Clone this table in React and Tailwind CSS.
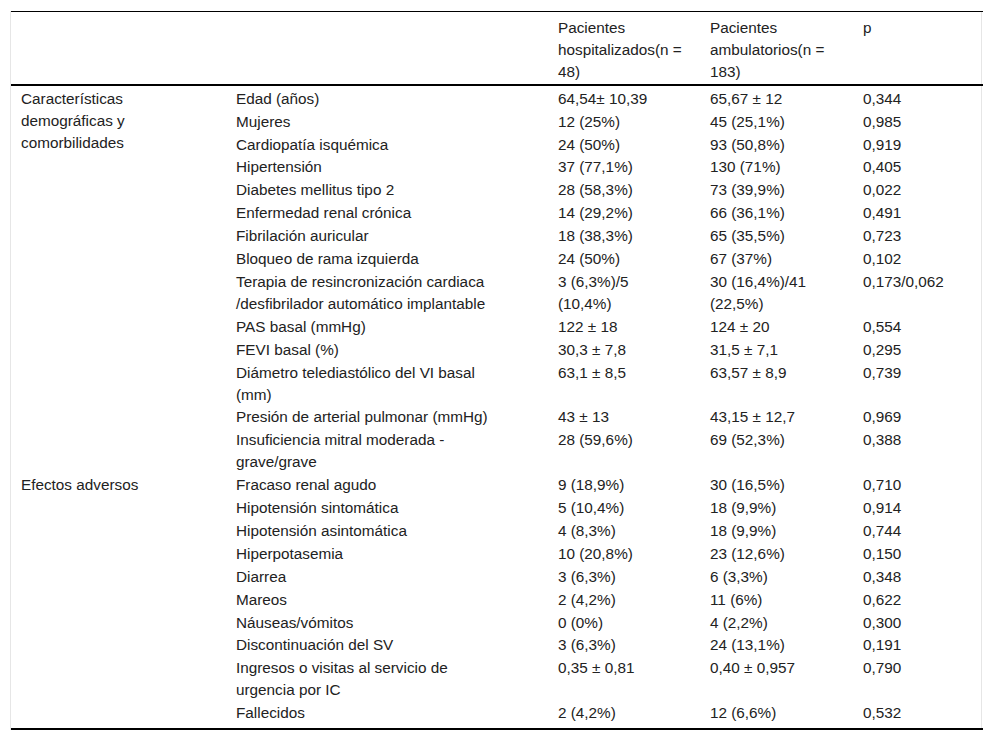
const rows = [
  { group: "Características\ndemográficas y\ncomorbilidades", span: 14, label: "Edad (años)", a: "64,54± 10,39", b: "65,67 ± 12", p: "0,344" },
  { label: "Mujeres", a: "12 (25%)", b: "45 (25,1%)", p: "0,985" },
  { label: "Cardiopatía isquémica", a: "24 (50%)", b: "93 (50,8%)", p: "0,919" },
  { label: "Hipertensión", a: "37 (77,1%)", b: "130 (71%)", p: "0,405" },
  { label: "Diabetes mellitus tipo 2", a: "28 (58,3%)", b: "73 (39,9%)", p: "0,022" },
  { label: "Enfermedad renal crónica", a: "14 (29,2%)", b: "66 (36,1%)", p: "0,491" },
  { label: "Fibrilación auricular", a: "18 (38,3%)", b: "65 (35,5%)", p: "0,723" },
  { label: "Bloqueo de rama izquierda", a: "24 (50%)", b: "67 (37%)", p: "0,102" },
  { label: "Terapia de resincronización cardiaca\n/desfibrilador automático implantable", a: "3 (6,3%)/5\n(10,4%)", b: "30 (16,4%)/41\n(22,5%)", p: "0,173/0,062" },
  { label: "PAS basal (mmHg)", a: "122 ± 18", b: "124 ± 20", p: "0,554" },
  { label: "FEVI basal (%)", a: "30,3 ± 7,8", b: "31,5 ± 7,1", p: "0,295" },
  { label: "Diámetro telediastólico del VI basal\n(mm)", a: "63,1 ± 8,5", b: "63,57 ± 8,9", p: "0,739" },
  { label: "Presión de arterial pulmonar (mmHg)", a: "43 ± 13", b: "43,15 ± 12,7", p: "0,969" },
  { label: "Insuficiencia mitral moderada -\ngrave/grave", a: "28 (59,6%)", b: "69 (52,3%)", p: "0,388" },
  { group: "Efectos adversos", span: 10, label: "Fracaso renal agudo", a: "9 (18,9%)", b: "30 (16,5%)", p: "0,710" },
  { label: "Hipotensión sintomática", a: "5 (10,4%)", b: "18 (9,9%)", p: "0,914" },
  { label: "Hipotensión asintomática", a: "4 (8,3%)", b: "18 (9,9%)", p: "0,744" },
  { label: "Hiperpotasemia", a: "10 (20,8%)", b: "23 (12,6%)", p: "0,150" },
  { label: "Diarrea", a: "3 (6,3%)", b: "6 (3,3%)", p: "0,348" },
  { label: "Mareos", a: "2 (4,2%)", b: "11 (6%)", p: "0,622" },
  { label: "Náuseas/vómitos", a: "0 (0%)", b: "4 (2,2%)", p: "0,300" },
  { label: "Discontinuación del SV", a: "3 (6,3%)", b: "24 (13,1%)", p: "0,191" },
  { label: "Ingresos o visitas al servicio de\nurgencia por IC", a: "0,35 ± 0,81", b: "0,40 ± 0,957", p: "0,790" },
  { label: "Fallecidos", a: "2 (4,2%)", b: "12 (6,6%)", p: "0,532", last: true },
];

export default function App() {
  const td = "align-top pl-[10px] pr-[6px] whitespace-pre-line";
  return (
    <div className="bg-white min-h-[740px] pt-[11px] px-[10px] text-[15.3px] leading-[21.9px] text-[#222]" style={{ fontFamily: '"Liberation Sans", Arial, sans-serif' }}>
      <div className="w-[972px] border-x border-[#e6e6e6]">
        <table className="w-full border-collapse table-fixed">
          <colgroup>
            <col className="w-[215px]" />
            <col className="w-[322px]" />
            <col className="w-[152px]" />
            <col className="w-[153px]" />
            <col className="w-[130px]" />
          </colgroup>
          <thead>
            <tr className="border-t border-black border-b-2">
              <th className={`${td} pt-[5px] pb-px font-normal text-left`}></th>
              <th className={`${td} pt-[5px] pb-px font-normal text-left`}></th>
              <th className={`${td} pt-[5px] pb-px font-normal text-left`}>{"Pacientes\nhospitalizados(n =\n48)"}</th>
              <th className={`${td} pt-[5px] pb-px font-normal text-left`}>{"Pacientes\nambulatorios(n =\n183)"}</th>
              <th className={`${td} pt-[5px] pb-px font-normal text-left`}>p</th>
            </tr>
          </thead>
          <tbody>
            {rows.map((r, i) => {
              const pad = `${i === 0 ? "pt-[2px]" : "pt-px"} ${r.last ? "pb-[4px]" : "pb-0"}`;
              return (
                <tr key={i} className={r.last ? "border-b-2 border-black" : ""}>
                  {r.group && (
                    <td rowSpan={r.span} className={`${td} ${i === 0 ? "pt-[2px]" : "pt-px"} pb-0`}>
                      {r.group}
                    </td>
                  )}
                  <td className={`${td} ${pad}`}>{r.label}</td>
                  <td className={`${td} ${pad}`}>{r.a}</td>
                  <td className={`${td} ${pad}`}>{r.b}</td>
                  <td className={`${td} ${pad}`}>{r.p}</td>
                </tr>
              );
            })}
          </tbody>
        </table>
      </div>
    </div>
  );
}
